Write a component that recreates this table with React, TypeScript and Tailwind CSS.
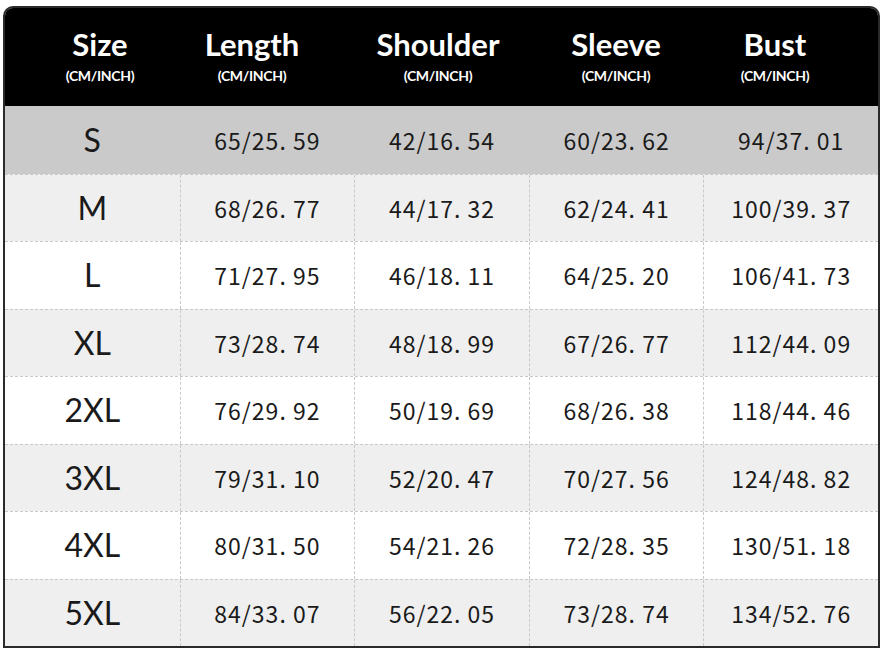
import React from 'react';

const heads = ['Size', 'Length', 'Shoulder', 'Sleeve', 'Bust'];
// header labels don't sit over the body columns exactly, so each one gets its own left offset
const headGap = ['ml-[25px]', 'ml-[12px]', 'ml-[46px]', 'ml-[38px]', 'ml-[19px]'];

const rows = [
  ['S', '65/25. 59', '42/16. 54', '60/23. 62', '94/37. 01'],
  ['M', '68/26. 77', '44/17. 32', '62/24. 41', '100/39. 37'],
  ['L', '71/27. 95', '46/18. 11', '64/25. 20', '106/41. 73'],
  ['XL', '73/28. 74', '48/18. 99', '67/26. 77', '112/44. 09'],
  ['2XL', '76/29. 92', '50/19. 69', '68/26. 38', '118/44. 46'],
  ['3XL', '79/31. 10', '52/20. 47', '70/27. 56', '124/48. 82'],
  ['4XL', '80/31. 50', '54/21. 26', '72/28. 35', '130/51. 18'],
  ['5XL', '84/33. 07', '56/22. 05', '73/28. 74', '134/52. 76'],
];

const rowBg = ['bg-[#cacaca]', 'bg-[#efefef]', 'bg-white', 'bg-[#efefef]', 'bg-white', 'bg-[#efefef]', 'bg-white', 'bg-[#efefef]'];

export default function App() {
  return (
    <div className="w-[883px] h-[652px] bg-white pt-[6px] pl-[3px]">
      <div className="w-[877px] border-2 border-[#2a2a2a] rounded-t-[10px] overflow-hidden bg-white">
        {/* header */}
        <div className="flex h-[98px] bg-black text-white font-['Lato',sans-serif]">
          {heads.map((h, i) => (
            <div key={h} className={`w-[140px] flex flex-col items-center justify-center pb-[2px] ${headGap[i]}`}>
              <span className="text-[31px] font-bold leading-[36px]">{h}</span>
              <span className="text-[14px] font-bold mt-[3px] tracking-[-0.3px]">(CM/INCH)</span>
            </div>
          ))}
        </div>

        {/* body */}
        {rows.map((r, i) => (
          <div key={r[0]} className={`grid grid-cols-5 h-[67.5px] border-t border-dashed border-[#c9c9c9] ${rowBg[i]}`}>
            {r.map((c, j) => (
              <div
                key={j}
                className={`flex items-center justify-center text-[#1a1a1a] ${j > 0 ? 'border-l border-dashed border-[#c9c9c9]' : ''} ${
                  j === 0 ? "text-[32px] font-['Lato',sans-serif]" : "text-[23px] tracking-[1px] font-['Noto_Sans_CJK_SC',sans-serif]"
                }`}
              >
                {c}
              </div>
            ))}
          </div>
        ))}
      </div>
    </div>
  );
}
